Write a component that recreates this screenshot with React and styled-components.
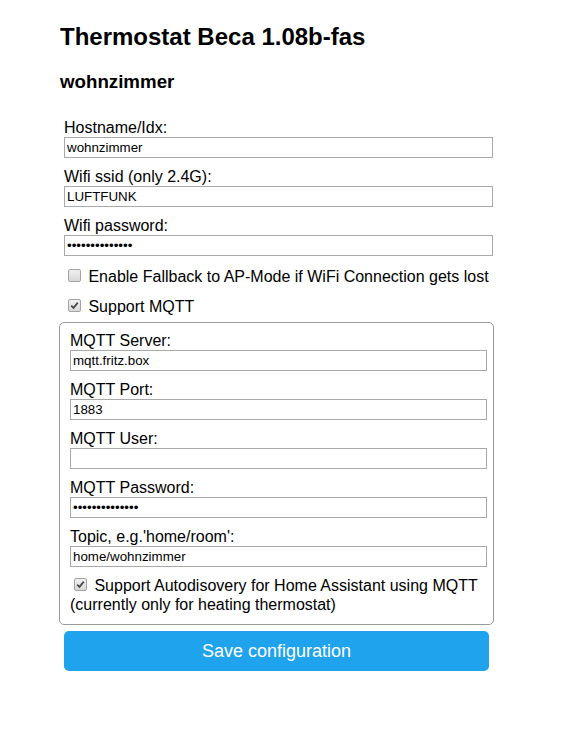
import React from 'react'
import styled, { createGlobalStyle } from 'styled-components'

const GlobalStyle = createGlobalStyle`
  body {
    margin: 0;
    background: #fff;
    color: #000;
    font-family: "Liberation Sans", Arial, sans-serif;
  }
`

const Page = styled.div`
  width: 435px;
  padding: 23px 0 40px 59px;
`
const Title = styled.h2`
  margin: 0 0 20px 1px;
  font-size: 24px;
  line-height: 28px;
  font-weight: bold;
`
const DeviceName = styled.h3`
  margin: 0 0 25px 1px;
  font-size: 18.72px;
  line-height: 22px;
  font-weight: bold;
`
const ConfigForm = styled.form`
  display: flex;
  flex-direction: column;
`
const Field = styled.div`
  padding: ${p => (p.$nested ? '0' : '0 1px 0 5px')};
  margin-bottom: 9px;
`
const Label = styled.label`
  display: block;
  font-size: 16px;
  line-height: 19px;
`
const TextInput = styled.input`
  display: block;
  box-sizing: border-box;
  width: 100%;
  height: 21px;
  margin: 0;
  padding: 0 2px;
  border: 1px solid #a9a9a9;
  border-radius: 0;
  background: #fff;
  color: #000;
  font-family: "Liberation Sans", Arial, sans-serif;
  font-size: 13.33px;
  outline: none;
`
const CheckRow = styled.div`
  padding-left: ${p => (p.$nested ? '0' : '5px')};
  margin-top: ${p => (p.$nested ? '0' : '2px')};
  font-size: 16px;
  line-height: 19px;

  & + & {
    margin-top: 11px;
  }
`
const Box = styled.span`
  display: inline-block;
  box-sizing: border-box;
  width: 13px;
  height: 13px;
  margin: 0 3px 0 4px;
  vertical-align: 0;
  border: 1px solid #a3a3a3;
  border-radius: 2px;
  background: linear-gradient(#f0f0f0, #d8d8d8);

  svg {
    display: block;
  }
`
const MqttBox = styled.fieldset`
  box-sizing: border-box;
  min-width: 0;
  margin: 6px 0 0;
  padding: 8px 6px 10px 10px;
  border: 1px solid #9a9a9a;
  border-radius: 5px;
`
const SaveButton = styled.button`
  display: block;
  box-sizing: border-box;
  width: 425px;
  height: 40px;
  margin: 6px 0 0 5px;
  padding: 0;
  border: 0;
  border-radius: 5px;
  background: #1fa3ec;
  color: #fff;
  font-family: "Liberation Sans", Arial, sans-serif;
  font-size: 18px;
  cursor: pointer;
`

const Checkbox = ({ checked }) => (
  <Box>
    {checked && (
      <svg width="11" height="11" viewBox="0 0 11 11">
        <polyline
          points="2.2,5.6 4.5,7.9 8.8,2.6"
          fill="none"
          stroke="#4a4a4a"
          strokeWidth="1.7"
        />
      </svg>
    )}
  </Box>
)

const TextField = ({ label, value, type = 'text', nested }) => (
  <Field $nested={nested}>
    <Label>{label}</Label>
    <TextInput type={type} value={value} readOnly />
  </Field>
)

export default function App() {
  return (
    <Page>
      <GlobalStyle />
      <Title>Thermostat Beca 1.08b-fas</Title>
      <DeviceName>wohnzimmer</DeviceName>
      <ConfigForm onSubmit={e => e.preventDefault()}>
        <TextField label="Hostname/Idx:" value="wohnzimmer" />
        <TextField label="Wifi ssid (only 2.4G):" value="LUFTFUNK" />
        <TextField label="Wifi password:" value="abcdefghijklmn" type="password" />
        <CheckRow>
          <Checkbox /> Enable Fallback to AP-Mode if WiFi Connection gets lost
        </CheckRow>
        <CheckRow>
          <Checkbox checked /> Support MQTT
        </CheckRow>
        <MqttBox>
          <TextField nested label="MQTT Server:" value="mqtt.fritz.box" />
          <TextField nested label="MQTT Port:" value="1883" />
          <TextField nested label="MQTT User:" value="" />
          <TextField nested label="MQTT Password:" value="abcdefghijklmn" type="password" />
          <TextField nested label="Topic, e.g.'home/room':" value="home/wohnzimmer" />
          <CheckRow $nested>
            <Checkbox checked /> Support Autodisovery for Home Assistant using MQTT (currently only for heating thermostat)
          </CheckRow>
        </MqttBox>
        <SaveButton type="submit">Save configuration</SaveButton>
      </ConfigForm>
    </Page>
  )
}
